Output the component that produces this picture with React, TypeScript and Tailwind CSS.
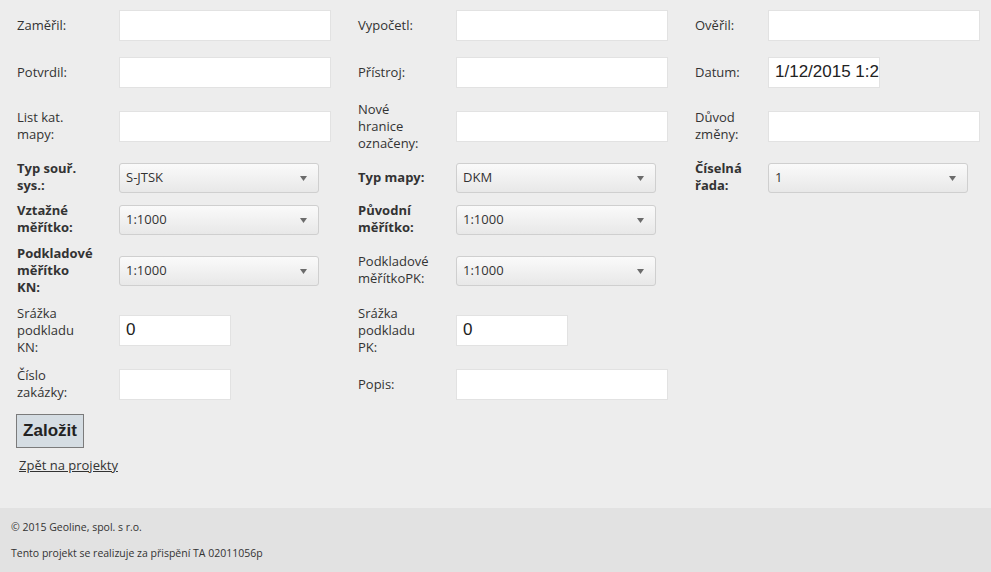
import { ReactNode } from "react"

const font = { fontFamily: "'Open Sans', 'Noto Sans', sans-serif" }

function Label({ children, bold }: { children: ReactNode; bold?: boolean }) {
  return (
    <div
      className={`text-[13px] leading-[17px] text-[#333] whitespace-nowrap ${bold ? "font-bold" : ""}`}
    >
      {children}
    </div>
  )
}

function TextBox({ value, narrow }: { value?: string; narrow?: boolean }) {
  return (
    <input
      type="text"
      defaultValue={value}
      className={`${narrow ? "w-[112px]" : "w-[212px]"} h-[31px] bg-white border border-[#e2e2e2] pl-[6px] pr-0 text-[17px] text-[#222] outline-none`}
      style={{ fontFamily: "'Liberation Sans', Arial, sans-serif" }}
    />
  )
}

function Select({ value }: { value: string }) {
  return (
    <div className="mt-[2px] w-[200px] h-[30px] flex items-center justify-between rounded-[3px] border border-[#cfcfcf] bg-gradient-to-b from-[#fafafa] to-[#e8e8e8] pl-[6px] pr-[11px]">
      <span className="text-[13px] text-[#333]">{value}</span>
      <svg width="7" height="5" viewBox="0 0 7 5">
        <path d="M0 0h7L3.5 5z" fill="#6b6b6b" />
      </svg>
    </div>
  )
}

const rowH = ["h-[46px]", "h-[48px]", "h-[60px]", "h-[42px]", "h-[42px]", "h-[60px]", "h-[60px]", "h-[48px]"]

function Row({ h, cells }: { h: string; cells: ReactNode[] }) {
  return (
    <div className={`grid grid-cols-[102px_239px_98px_239px_73px_1fr] items-center ${h}`}>
      {cells.map((c, i) => (
        <div key={i}>{c}</div>
      ))}
    </div>
  )
}

export default function App() {
  return (
    <div className="min-h-[572px] flex flex-col bg-[#ededed]" style={font}>
      <div className="pl-[17px] pt-[2px] pb-[32px]">
        <Row
          h={rowH[0]}
          cells={[
            <Label>Zaměřil:</Label>,
            <TextBox />,
            <Label>Vypočetl:</Label>,
            <TextBox />,
            <Label>Ověřil:</Label>,
            <TextBox />,
          ]}
        />
        <Row
          h={rowH[1]}
          cells={[
            <Label>Potvrdil:</Label>,
            <TextBox />,
            <Label>Přístroj:</Label>,
            <TextBox />,
            <Label>Datum:</Label>,
            <TextBox value="1/12/2015 1:23:41" narrow />,
          ]}
        />
        <Row
          h={rowH[2]}
          cells={[
            <Label>
              List kat.
              <br />
              mapy:
            </Label>,
            <TextBox />,
            <Label>
              Nové
              <br />
              hranice
              <br />
              označeny:
            </Label>,
            <TextBox />,
            <Label>
              Důvod
              <br />
              změny:
            </Label>,
            <TextBox />,
          ]}
        />
        <Row
          h={rowH[3]}
          cells={[
            <Label bold>
              Typ souř.
              <br />
              sys.:
            </Label>,
            <Select value="S-JTSK" />,
            <Label bold>Typ mapy:</Label>,
            <Select value="DKM" />,
            <Label bold>
              Číselná
              <br />
              řada:
            </Label>,
            <Select value="1" />,
          ]}
        />
        <Row
          h={rowH[4]}
          cells={[
            <Label bold>
              Vztažné
              <br />
              měřítko:
            </Label>,
            <Select value="1:1000" />,
            <Label bold>
              Původní
              <br />
              měřítko:
            </Label>,
            <Select value="1:1000" />,
            null,
            null,
          ]}
        />
        <Row
          h={rowH[5]}
          cells={[
            <Label bold>
              Podkladové
              <br />
              měřítko
              <br />
              KN:
            </Label>,
            <Select value="1:1000" />,
            <Label>
              Podkladové
              <br />
              měřítkoPK:
            </Label>,
            <Select value="1:1000" />,
            null,
            null,
          ]}
        />
        <Row
          h={rowH[6]}
          cells={[
            <Label>
              Srážka
              <br />
              podkladu
              <br />
              KN:
            </Label>,
            <TextBox value="0" narrow />,
            <Label>
              Srážka
              <br />
              podkladu
              <br />
              PK:
            </Label>,
            <TextBox value="0" narrow />,
            null,
            null,
          ]}
        />
        <Row
          h={rowH[7]}
          cells={[
            <Label>
              Číslo
              <br />
              zakázky:
            </Label>,
            <TextBox narrow />,
            <Label>Popis:</Label>,
            <TextBox />,
            null,
            null,
          ]}
        />
        <button
          className="mt-[6px] -ml-px w-[68px] h-[34px] bg-[#d5dde3] border border-[#7b7b7b] text-[17px] font-bold text-[#222]"
          style={{ fontFamily: "'Liberation Sans', Arial, sans-serif" }}
        >
          Založit
        </button>
        <div className="mt-[4px] ml-[2px]">
          <a href="#" className="text-[13px] leading-[17px] text-[#333] underline">
            Zpět na projekty
          </a>
        </div>
      </div>
      <footer className="mt-auto h-[64px] bg-[#e2e2e2] px-[11px] pt-[12px] text-[10.5px] leading-[14px] text-[#333]">
        <p>© 2015 Geoline, spol. s r.o.</p>
        <p className="mt-[12px]">Tento projekt se realizuje za přispění TA 02011056p</p>
      </footer>
    </div>
  )
}
